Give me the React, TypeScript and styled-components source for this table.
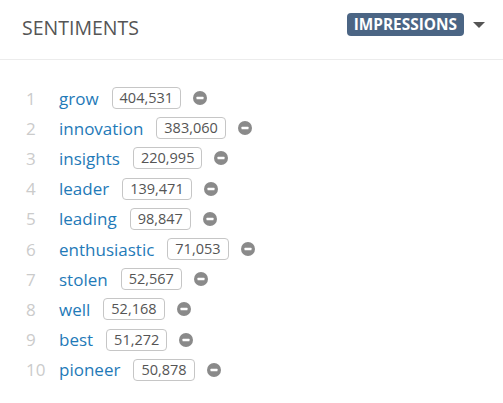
import React from "react";
import styled, { createGlobalStyle } from "styled-components";

const Global = createGlobalStyle`
  html, body { margin: 0; padding: 0; background: #fff; }
  body { font-family: "Open Sans", "Liberation Sans", sans-serif; }
`;

const Panel = styled.div`
  width: 503px;
  height: 403px;
  background: #fff;
  box-sizing: border-box;
`;

const Header = styled.div`
  height: 60px;
  box-sizing: border-box;
  border-bottom: 1px solid #ececec;
  display: flex;
  align-items: flex-start;
  justify-content: space-between;
  padding: 13px 18px 0 22px;
`;

const Title = styled.h2`
  margin: 2px 0 0;
  font-size: 19.5px;
  line-height: 26px;
  font-weight: 400;
  color: #555;
`;

const Metric = styled.div`
  display: flex;
  align-items: center;
  gap: 9px;
`;

const Badge = styled.span`
  background: #4b6584;
  color: #fff;
  font-weight: 700;
  font-size: 15.4px;
  line-height: 23px;
  height: 23px;
  padding: 0 7px;
  border-radius: 4px;
`;

const Caret = styled.span`
  width: 0;
  height: 0;
  margin-top: 1px;
  border-left: 6.5px solid transparent;
  border-right: 6.5px solid transparent;
  border-top: 6px solid #555;
`;

const List = styled.ol`
  list-style: none;
  margin: 0;
  padding: 23px 0 0 26px;
`;

const Row = styled.li`
  height: 30.2px;
  display: flex;
  align-items: center;
`;

const Rank = styled.span`
  width: 33px;
  font-size: 17px;
  color: #cbcbcb;
`;

const Word = styled.a`
  font-size: 17px;
  color: #1f7ab8;
  text-decoration: none;
`;

const Count = styled.span`
  margin-left: 13px;
  font-size: 14.5px;
  color: #555;
  border: 1px solid #c6c6c6;
  border-radius: 4px;
  height: 20px;
  line-height: 20px;
  padding: 0 7px;
`;

const RemoveIcon = styled.svg`
  margin-left: 12px;
  width: 14px;
  height: 14px;
`;

const data: [string, string][] = [
  ["grow", "404,531"],
  ["innovation", "383,060"],
  ["insights", "220,995"],
  ["leader", "139,471"],
  ["leading", "98,847"],
  ["enthusiastic", "71,053"],
  ["stolen", "52,567"],
  ["well", "52,168"],
  ["best", "51,272"],
  ["pioneer", "50,878"],
];

export default function App() {
  return (
    <Panel>
      <Global />
      <Header>
        <Title>SENTIMENTS</Title>
        <Metric>
          <Badge>IMPRESSIONS</Badge>
          <Caret />
        </Metric>
      </Header>
      <List>
        {data.map(([w, c], i) => (
          <Row key={w}>
            <Rank>{i + 1}</Rank>
            <Word href="#">{w}</Word>
            <Count>{c}</Count>
            <RemoveIcon viewBox="0 0 14 14">
              <circle cx="7" cy="7" r="7" fill="#8a8a8a" />
              <rect x="3.5" y="5.8" width="7" height="2.4" rx="0.5" fill="#fff" />
            </RemoveIcon>
          </Row>
        ))}
      </List>
    </Panel>
  );
}
